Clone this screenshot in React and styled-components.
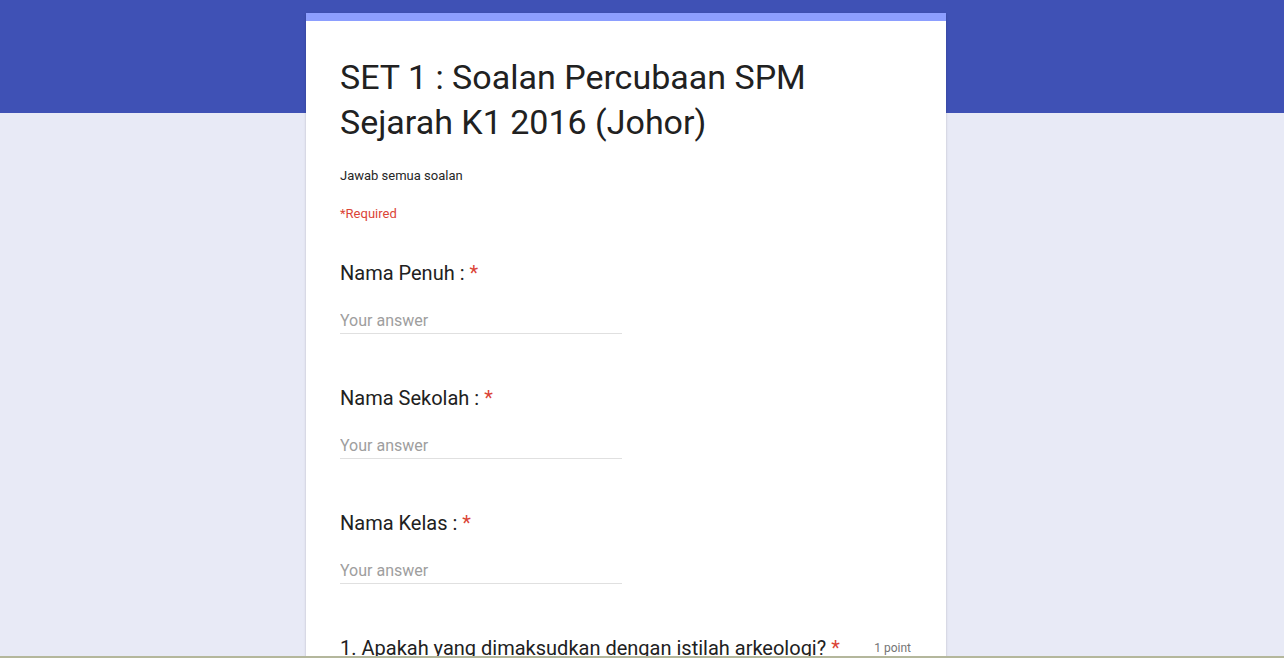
import React from "react";
import styled, { createGlobalStyle } from "styled-components";

const Global = createGlobalStyle`
  html, body { margin: 0; padding: 0; overflow: hidden; height: 100%; }
  body { font-family: Roboto, "Liberation Sans", Arial, sans-serif; background: #e8eaf6; }
  * { box-sizing: border-box; }
`;

const Page = styled.div`
  min-height: 100vh;
  background: linear-gradient(#3f51b5 0, #3f51b5 113px, #e8eaf6 113px);
  padding-top: 13px;
`;

const Card = styled.div`
  width: 640px;
  margin-left: 306px;
  min-height: 900px;
  background: #fff;
  border-top: 8px solid #8c9eff;
  box-shadow: 0 2px 1px -1px rgba(0,0,0,.2), 0 1px 1px 0 rgba(0,0,0,.14), 0 1px 3px 0 rgba(0,0,0,.12);
  padding: 34px 34px 40px 34px;
`;

const Title = styled.h1`
  margin: 0;
  font-size: 34px;
  line-height: 45px;
  font-weight: 400;
  color: #212121;
  max-width: 520px;
`;

const Description = styled.div`
  margin-top: 22px;
  font-size: 13px;
  line-height: 18px;
  color: #262626;
`;

const RequiredNote = styled.div`
  margin-top: 20px;
  font-size: 13px;
  line-height: 18px;
  color: #db4437;
`;

const Questions = styled.div`
  margin-top: 38px;
  display: flex;
  flex-direction: column;
  gap: 52px;
`;

const Question = styled.div`
  display: flex;
  flex-direction: column;
`;

const QHeader = styled.div`
  display: flex;
  align-items: center;
  justify-content: space-between;
`;

const QTitle = styled.div`
  font-size: 20px;
  line-height: 24px;
  color: #212121;
`;

const Star = styled.span`
  color: #db4437;
  margin-left: 5px;
`;

const Points = styled.div`
  font-size: 12px;
  color: #757575;
  margin-right: 1px;
`;

const Answer = styled.input`
  margin-top: 23px;
  width: 282px;
  height: 26px;
  padding: 0 0 1px 0;
  border: none;
  border-bottom: 1px solid #e0e0e0;
  outline: none;
  font-family: Roboto, "Liberation Sans", Arial, sans-serif;
  font-size: 16px;
  line-height: 24px;
  color: #212121;
  background: transparent;
  &::placeholder { color: #9e9e9e; }
`;

const BottomEdge = styled.div`
  position: fixed;
  left: 0;
  right: 0;
  bottom: 0;
  height: 2px;
  background: #b4b79c;
`;

const fields = ["Nama Penuh :", "Nama Sekolah :", "Nama Kelas :"];

export default function App() {
  return (
    <>
      <Global />
      <Page>
        <Card>
          <Title>SET 1 : Soalan Percubaan SPM Sejarah K1 2016 (Johor)</Title>
          <Description>Jawab semua soalan</Description>
          <RequiredNote>*Required</RequiredNote>
          <Questions>
            {fields.map((f) => (
              <Question key={f}>
                <QHeader>
                  <QTitle>
                    {f}
                    <Star>*</Star>
                  </QTitle>
                </QHeader>
                <Answer placeholder="Your answer" />
              </Question>
            ))}
            <Question>
              <QHeader>
                <QTitle>
                  1. Apakah yang dimaksudkan dengan istilah arkeologi?
                  <Star>*</Star>
                </QTitle>
                <Points>1 point</Points>
              </QHeader>
            </Question>
          </Questions>
        </Card>
      </Page>
      <BottomEdge />
    </>
  );
}
